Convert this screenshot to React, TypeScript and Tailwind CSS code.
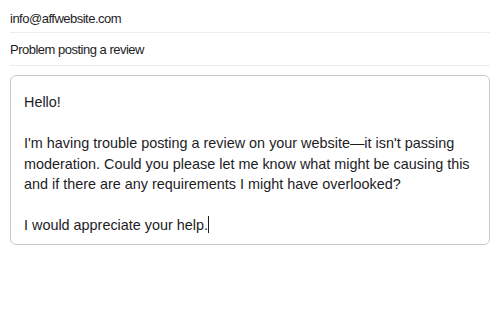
export default function App() {
    return (
        <div className="w-[500px] h-[331px] bg-white px-[10px] pt-[6px]" style={{ fontFamily: '"Liberation Sans", Arial, sans-serif' }}>
            {/* Recipient */}
            <div className="h-[27px] flex items-center text-[13px] tracking-[-0.5px] text-[#1d1d1f] border-b border-[#ececec]">
                info@affwebsite.com
            </div>

            {/* Subject */}
            <div className="h-[33px] flex items-center pt-[2px] text-[13px] tracking-[-0.5px] text-[#1d1d1f] border-b border-[#ececec]">
                Problem posting a review
            </div>

            {/* Message */}
            <div className="mt-[9px] h-[170px] rounded-[6px] border border-[#c9c9c9] px-[13px] pt-[16px] text-[14.4px] leading-[20.5px] text-[#1d1d1f]">
                <p>Hello!</p>
                <p className="h-[20.5px]"></p>
                <p>
                    I'm having trouble posting a review on your website—it isn't passing moderation. Could you please let me know what might be causing this and if there are any requirements I might have overlooked?
                </p>
                <p className="h-[20.5px]"></p>
                <p>
                    I would appreciate your help.<span className="inline-block w-[1px] h-[17px] bg-[#1d1d1f] align-[-3px]"></span>
                </p>
            </div>
        </div>
    );
}
